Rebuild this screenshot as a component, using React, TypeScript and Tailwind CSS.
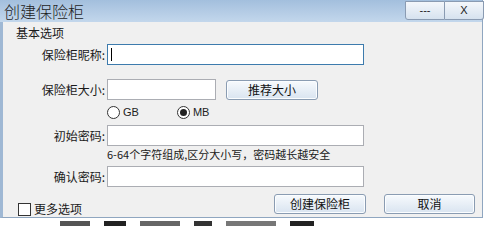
import React from 'react';

const font = { fontFamily: '"Noto Sans CJK SC", "Liberation Sans", sans-serif' };

function Input({ focused, w = 'w-[257px]' }: { focused?: boolean; w?: string }) {
  return (
    <div
      className={`${w} h-[21px] bg-white border flex items-center pl-[3px] ${
        focused ? 'border-[#3d7bad]' : 'border-[#abadb3]'
      }`}
    >
      {focused && <div className="w-px h-[13px] bg-black" />}
    </div>
  );
}

function Btn({ children, w }: { children: React.ReactNode; w: string }) {
  return (
    <div
      className={`${w} h-[20px] rounded-[3px] border border-[#8a9cb2] bg-gradient-to-b from-[#f7fafd] to-[#d9e4f0] flex items-center justify-center text-[12px] text-[#111] shadow-[inset_0_0_0_1px_#fbfdff]`}
    >
      {children}
    </div>
  );
}

function Label({ children }: { children: React.ReactNode }) {
  return <div className="w-[103px] text-right pr-[1px] text-[12px] text-[#1a1a1a]">{children}</div>;
}

function Radio({ checked, label }: { checked?: boolean; label: string }) {
  return (
    <div className="flex items-center gap-[3px]">
      <div className="w-[13px] h-[13px] rounded-full border border-[#333] bg-white flex items-center justify-center">
        {checked && <div className="w-[7px] h-[7px] rounded-full bg-[#222]" />}
      </div>
      <span className="text-[11px] text-[#222]" style={{ fontFamily: '"Liberation Sans", sans-serif' }}>
        {label}
      </span>
    </div>
  );
}

export default function App() {
  return (
    <div className="w-[486px] h-[226px] bg-white overflow-hidden relative" style={font}>
      <div className="w-[483px] h-[218px] border-l-[3px] border-r border-b border-[#9fb8d4] border-r-[#8fa6c0] border-b-[#8fa6c0] bg-[#f0f0f0] flex flex-col">
        {/* title bar */}
        <div className="h-[22px] bg-gradient-to-b from-[#a3bfdd] to-[#c3d7ec] flex items-start justify-between -ml-[3px]">
          <div className="pl-[4px] text-[16px] leading-[22px] text-[#1e1e1e] font-light">创建保险柜</div>
          <div className="flex pt-[1px] -mr-[2px]">
            <div className="w-[40px] h-[19px] border border-[#8a9bb2] rounded-bl-[3px] bg-gradient-to-b from-[#f4f7fb] to-[#d6e2ef] flex items-center justify-center text-[11px] text-[#222]" style={{ fontFamily: '"Liberation Sans", sans-serif' }}>
              ---
            </div>
            <div className="w-[39px] h-[19px] border border-l-0 border-[#8a9bb2] rounded-br-[3px] bg-gradient-to-b from-[#f4f7fb] to-[#d6e2ef] flex items-center justify-center text-[11px] text-[#222]" style={{ fontFamily: '"Liberation Sans", sans-serif' }}>
              X
            </div>
          </div>
        </div>

        {/* body */}
        <div className="flex flex-col pt-[3px]">
          <div className="pl-[13px] text-[12px] leading-[16px] text-[#1a1a1a]">基本选项</div>

          <div className="flex items-center gap-[1px] mt-[3px]">
            <Label>保险柜昵称:</Label>
            <Input focused />
          </div>

          <div className="flex items-center gap-[1px] mt-[14px]">
            <Label>保险柜大小:</Label>
            <Input w="w-[109px]" />
            <div className="ml-[9px]">
              <Btn w="w-[92px]">推荐大小</Btn>
            </div>
          </div>

          <div className="flex items-center gap-[38px] pl-[104px] mt-[4px] h-[16px]">
            <Radio label="GB" />
            <Radio checked label="MB" />
          </div>

          <div className="flex items-center gap-[1px] mt-[5px]">
            <Label>初始密码:</Label>
            <Input />
          </div>
          <div className="pl-[104px] text-[11px] leading-[14px] text-[#1a1a1a] mt-[1px]">
            6-64个字符组成,区分大小写，密码越长越安全
          </div>

          <div className="flex items-center gap-[1px] mt-[5px]">
            <Label>确认密码:</Label>
            <Input />
          </div>

          <div className="flex items-center justify-between mt-[3px] pl-[15px] pr-[7px]">
            <div className="flex items-center gap-[3px] mt-[10px]">
              <div className="w-[13px] h-[13px] border border-[#333] bg-white" />
              <span className="text-[12px] text-[#1a1a1a]">更多选项</span>
            </div>
            <div className="flex gap-[18px]">
              <Btn w="w-[92px]">创建保险柜</Btn>
              <Btn w="w-[91px]">取消</Btn>
            </div>
          </div>
        </div>
      </div>
      {/* glimpse of content behind the dialog */}
      <div className="flex items-start gap-[14px] pl-[60px] pt-[3px]">
        <div className="w-[30px] h-[5px] bg-[#555]" />
        <div className="w-[22px] h-[5px] bg-[#222]" />
        <div className="w-[40px] h-[5px] bg-[#666]" />
        <div className="w-[18px] h-[5px] bg-[#333]" />
        <div className="w-[50px] h-[5px] bg-[#777]" />
        <div className="w-[24px] h-[5px] bg-[#222]" />
      </div>
    </div>
  );
}
